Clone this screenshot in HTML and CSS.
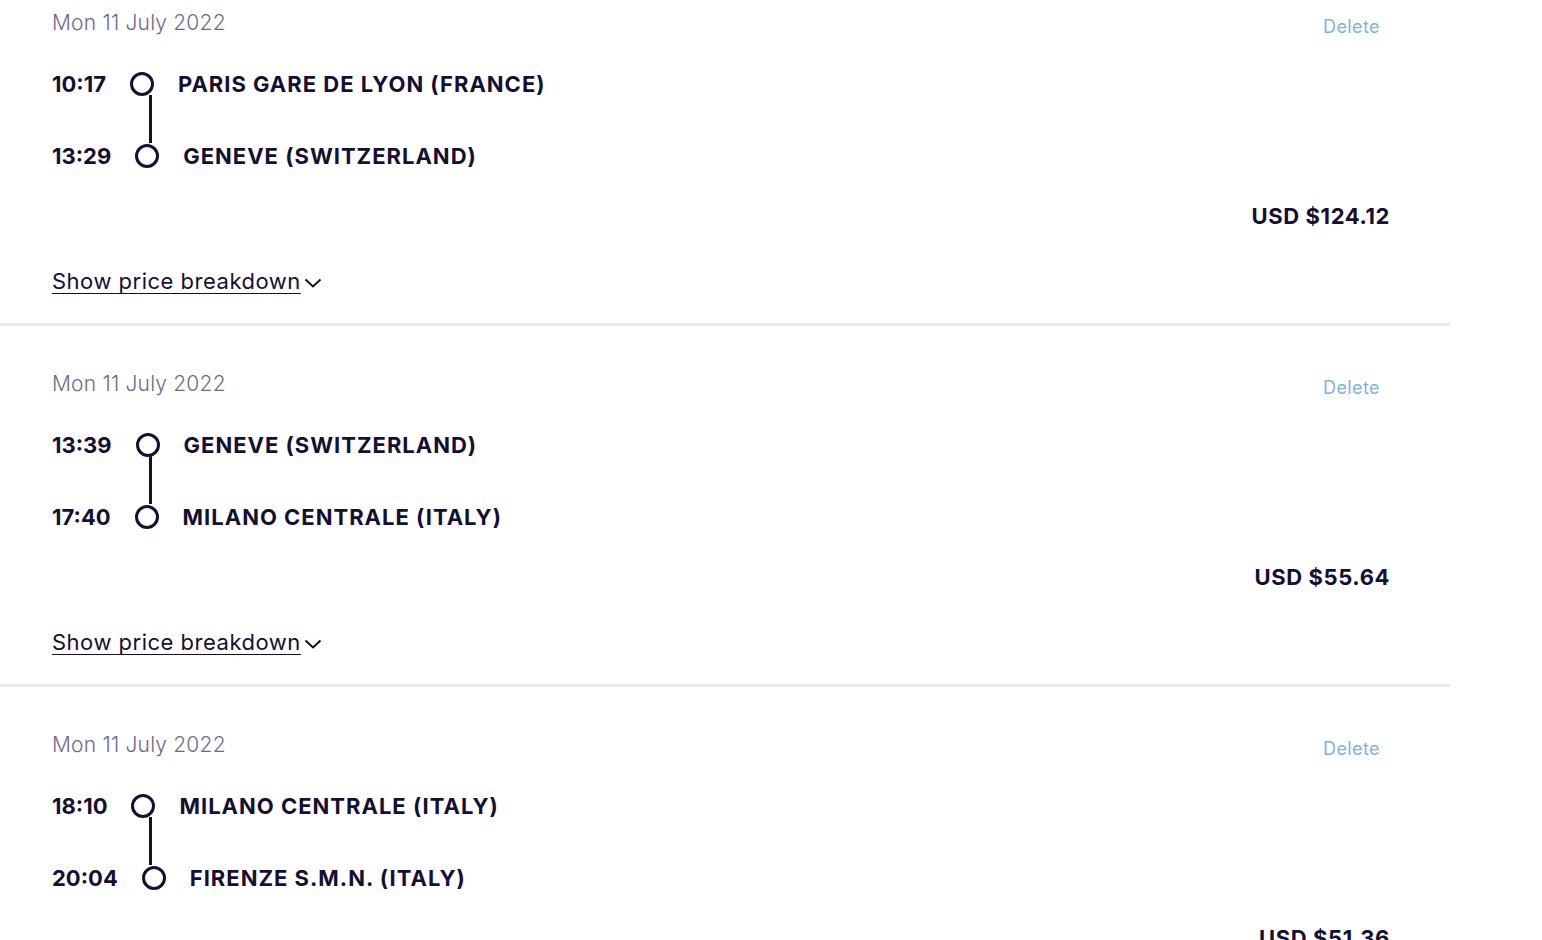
FILE: index.html
```html
<!DOCTYPE html>
<html>
<head>
<meta charset="utf-8">
<link rel="stylesheet" href="styles.css">
</head>
<body>
<div class="list">
  <div class="card">
    <div class="head"><span class="date">Mon 11 July 2022</span><span class="delete">Delete</span></div>
    <div class="stops">
      <div class="row"><span class="time">10:17</span><span class="dot"></span><span class="station">PARIS GARE DE LYON (FRANCE)</span></div>
      <div class="row"><span class="time">13:29</span><span class="dot"></span><span class="station">GENEVE (SWITZERLAND)</span></div>
      <span class="line"></span>
    </div>
    <div class="price">USD $124.12</div>
    <div class="breakdown"><span class="link">Show price breakdown</span><svg class="chev" width="18" height="10" viewBox="0 0 18 10"><path d="M1.5 1.5 L9 8.5 L16.5 1.5" fill="none" stroke="#111" stroke-width="2"/></svg></div>
  </div>
  <div class="card">
    <div class="head"><span class="date">Mon 11 July 2022</span><span class="delete">Delete</span></div>
    <div class="stops">
      <div class="row"><span class="time">13:39</span><span class="dot"></span><span class="station">GENEVE (SWITZERLAND)</span></div>
      <div class="row"><span class="time">17:40</span><span class="dot"></span><span class="station">MILANO CENTRALE (ITALY)</span></div>
      <span class="line"></span>
    </div>
    <div class="price">USD $55.64</div>
    <div class="breakdown"><span class="link">Show price breakdown</span><svg class="chev" width="18" height="10" viewBox="0 0 18 10"><path d="M1.5 1.5 L9 8.5 L16.5 1.5" fill="none" stroke="#111" stroke-width="2"/></svg></div>
  </div>
  <div class="card">
    <div class="head"><span class="date">Mon 11 July 2022</span><span class="delete">Delete</span></div>
    <div class="stops">
      <div class="row"><span class="time">18:10</span><span class="dot"></span><span class="station">MILANO CENTRALE (ITALY)</span></div>
      <div class="row"><span class="time">20:04</span><span class="dot"></span><span class="station">FIRENZE S.M.N. (ITALY)</span></div>
      <span class="line"></span>
    </div>
    <div class="price">USD $51.36</div>
    <div class="breakdown"><span class="link">Show price breakdown</span><svg class="chev" width="18" height="10" viewBox="0 0 18 10"><path d="M1.5 1.5 L9 8.5 L16.5 1.5" fill="none" stroke="#111" stroke-width="2"/></svg></div>
  </div>
</div>
</body>
</html>
```

FILE: styles.css
```css
html, body {
  margin: 0;
  padding: 0;
  background: #ffffff;
  overflow: hidden;
}
body {
  font-family: Inter, "Noto Sans", sans-serif;
  color: #150f33;
}
.list {
  margin-top: -35px;
}
.card {
  width: 1450px;
  box-sizing: border-box;
  padding: 43px 60px 27px 52px;
  border-bottom: 3px solid #e9e9ee;
}
.head {
  display: flex;
  justify-content: space-between;
  align-items: flex-start;
  height: 30px;
}
.date {
  font-size: 21px;
  line-height: 30px;
  font-weight: 300;
  letter-spacing: 0.2px;
  color: #6f6b85;
}
.delete {
  font-size: 18px;
  line-height: 30px;
  padding-top: 4px;
  margin-right: 10px;
  font-weight: 400;
  letter-spacing: 0.4px;
  color: #7fb3e3;
}
.stops {
  position: relative;
  margin-top: 31px;
  display: flex;
  flex-direction: column;
  gap: 42px;
}
.row {
  display: flex;
  align-items: center;
  height: 30px;
}
.time, .station {
  font-size: 22px;
  font-weight: 700;
  line-height: 30px;
}
.station {
  letter-spacing: 1px;
}
.dot {
  width: 24px;
  height: 24px;
  box-sizing: border-box;
  border: 3px solid #150f33;
  border-radius: 50%;
  margin: 0 24px;
  background: #fff;
  flex: none;
}
.line {
  position: absolute;
  left: 97px;
  top: 26px;
  width: 3px;
  height: 48px;
  background: #150f33;
}
.price {
  margin-top: 30px;
  text-align: right;
  font-size: 22px;
  font-weight: 700;
  line-height: 30px;
  letter-spacing: 0.6px;
}
.breakdown {
  margin-top: 35px;
  display: flex;
  align-items: center;
  height: 30px;
}
.link {
  font-size: 22px;
  line-height: 30px;
  letter-spacing: 0.5px;
  text-decoration: underline;
  text-underline-offset: 4px;
  text-decoration-thickness: 1px;
}
.chev {
  margin-left: 3px;
  margin-top: 3px;
}
```
